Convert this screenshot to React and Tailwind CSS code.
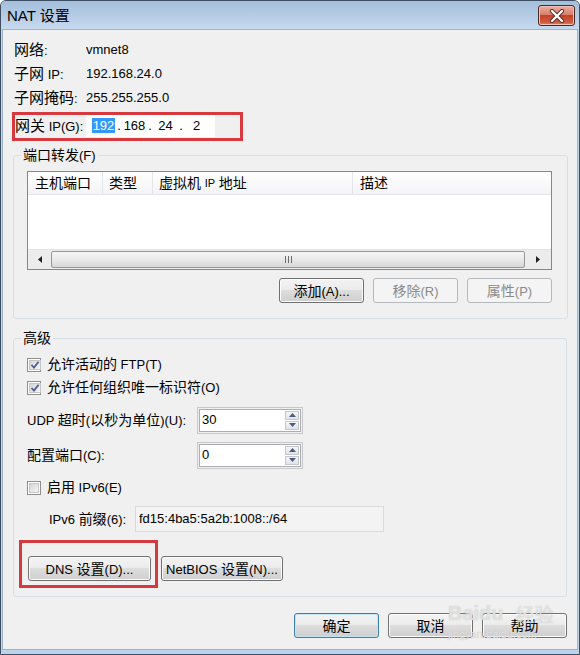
import React from "react";

const Z = ({ children }) => <span className="text-[14px]">{children}</span>;
const Z15 = ({ children }) => <span className="text-[15px]">{children}</span>;

const GRAD = "bg-[linear-gradient(#f3f3f3_0%,#ececec_45%,#dddddd_50%,#cfcfcf_100%)]";

function Btn({ children, kind = "normal", w = "w-[85px]" }) {
  const base = "h-[25px] rounded-[3px] border flex items-center justify-center text-[13px] leading-none shrink-0";
  let k = "border-[#707070] text-black shadow-[inset_0_0_0_1px_#fbfbfb] " + GRAD;
  if (kind === "disabled") k = "border-[#b5b9bc] text-[#8a8a8a] bg-[#f4f4f4]";
  if (kind === "default") k = "border-[#3c7fb1] text-black shadow-[inset_0_0_0_1px_#bfe6f7] " + GRAD;
  return (
    <div className={base + " " + k + " " + w}>
      <span className="whitespace-pre">{children}</span>
    </div>
  );
}

function Check({ checked }) {
  return (
    <span className="w-[14px] h-[14px] border border-[#8e8f8f] bg-white p-[1px] flex shrink-0">
      <span className="flex-1 bg-[linear-gradient(135deg,#d4d4d4,#f6f6f6)] border border-[#c6c6c6] flex items-center justify-center">
        {checked && (
          <svg width="10" height="10" viewBox="0 0 10 10">
            <path d="M1.5 5 L4 7.6 L8.6 1.8" fill="none" stroke="#4b5f8f" strokeWidth="1.8" />
          </svg>
        )}
      </span>
    </span>
  );
}

function Spin({ value }) {
  return (
    <div className="w-[106px] h-[27px] border border-[#c8c8c8] p-[1px] flex">
      <div className="flex-1 border border-[#abadb3] bg-white flex">
        <div className="flex-1 pl-[2px] flex items-center text-[13px]">{value}</div>
        <div className="w-[16px] flex flex-col gap-[1px] p-[1px]">
          <div className="flex-1 border border-[#c3c8cf] bg-linear-to-b from-[#f6f6f6] to-[#e0e3e8] flex items-center justify-center">
            <svg width="7" height="4" viewBox="0 0 7 4"><path d="M0 4 L3.5 0 L7 4Z" fill="#4d5c80" /></svg>
          </div>
          <div className="flex-1 border border-[#c3c8cf] bg-linear-to-b from-[#f6f6f6] to-[#e0e3e8] flex items-center justify-center">
            <svg width="7" height="4" viewBox="0 0 7 4"><path d="M0 0 L3.5 4 L7 0Z" fill="#4d5c80" /></svg>
          </div>
        </div>
      </div>
    </div>
  );
}

export default function App() {
  return (
    <div className="relative w-[580px] h-[655px] font-['Liberation_Sans','Noto_Sans_CJK_SC',sans-serif] text-[13px] text-black bg-[#bcd3ea] border border-[#3e4f63] rounded-t-[6px] flex flex-col overflow-hidden">
      {/* Title bar */}
      <div className="h-[28px] shrink-0 flex items-start justify-between bg-linear-to-b from-[#a4bedb] to-[#c6d9ee]">
        <div className="pl-[6px] pt-[5px] text-[15px] leading-[18px]">
          NAT <span className="font-['Noto_Sans_CJK_SC',sans-serif]">设置</span>
        </div>
        <div className="mt-[4px] mr-[4px] w-[37px] h-[21px] rounded-[3px] border border-[#4a2a28] bg-[linear-gradient(#eab0a3_0%,#d9806c_45%,#c3442a_50%,#cf5a3e_85%,#e0876a_100%)] shadow-[inset_0_0_0_1px_#f2c1b5] flex items-center justify-center">
          <svg width="16" height="14" viewBox="0 0 16 14">
            <path d="M3 2 L13 12 M13 2 L3 12" stroke="#5a2a22" strokeWidth="4.2" strokeLinecap="round" />
            <path d="M3 2 L13 12 M13 2 L3 12" stroke="#ffffff" strokeWidth="2.4" strokeLinecap="round" />
          </svg>
        </div>
      </div>

      {/* Body */}
      <div className="flex-1 mx-[1px] mb-[3px] border border-[#9fb3c9] bg-[#f0f0f0] flex flex-col pt-[8px]">
        <div className="flex h-[24px] items-center pl-[11px]">
          <div className="w-[72px]"><Z15>网络</Z15>:</div>
          <div>vmnet8</div>
        </div>
        <div className="flex h-[24px] items-center pl-[11px]">
          <div className="w-[72px]"><Z15>子网</Z15> IP:</div>
          <div>192.168.24.0</div>
        </div>
        <div className="flex h-[24px] items-center pl-[11px]">
          <div className="w-[72px] whitespace-nowrap"><Z15>子网掩码</Z15>:</div>
          <div>255.255.255.0</div>
        </div>

        {/* Gateway red box */}
        <div className="mt-[2px] ml-[9px] w-[231px] h-[29px] border-[3px] border-[#d7393f] flex items-start">
          <div className="w-[71px] h-[23px] flex items-center whitespace-nowrap"><Z15>网关</Z15>&nbsp;IP(G):</div>
          <div className="w-[129px] h-[22px] bg-white flex items-center pl-[5px] text-[13px]">
            <span className="w-[25px] text-center"><span className="bg-[#3399ff] text-white px-[1px]">192</span></span>
            <span className="w-[6px] text-center">.</span>
            <span className="w-[25px] text-center">168</span>
            <span className="w-[6px] text-center">.</span>
            <span className="w-[25px] text-center">24</span>
            <span className="w-[6px] text-center">.</span>
            <span className="w-[25px] text-center">2</span>
          </div>
        </div>

        {/* Port forwarding */}
        <fieldset className="mt-[5px] ml-[10px] w-[555px] border border-[#d5dfe5] rounded-[3px]">
          <legend className="ml-[7px] px-[2px] leading-[18px]"><Z>端口转发</Z>(F)</legend>
          <div className="pl-[13px] pt-[6px] pb-[15px]">
            <div className="w-[525px] h-[99px] border border-[#828790] bg-white flex flex-col">
              <div className="h-[23px] flex border-b border-[#e3e5e8] bg-linear-to-b from-white to-[#f3f4f6]">
                <div className="w-[75px] pl-[7px] border-r border-[#e3e5e8] flex items-center"><Z>主机端口</Z></div>
                <div className="w-[50px] pl-[6px] border-r border-[#e3e5e8] flex items-center"><Z>类型</Z></div>
                <div className="w-[200px] pl-[6px] border-r border-[#e3e5e8] flex items-center whitespace-nowrap"><Z>虚拟机</Z>&nbsp;<span className="text-[11px]">IP</span>&nbsp;<Z>地址</Z></div>
                <div className="flex-1 pl-[7px] flex items-center"><Z>描述</Z></div>
              </div>
              <div className="flex-1" />
              <div className="h-[20px] flex bg-[#ececec] border-t border-[#e2e2e2]">
                <div className="w-[23px] flex items-center justify-center">
                  <svg width="4" height="7" viewBox="0 0 4 7"><path d="M4 0 L0 3.5 L4 7Z" fill="#222" /></svg>
                </div>
                <div className="flex-1 my-[1px] rounded-[2px] border border-[#979797] bg-[linear-gradient(#f6f6f6_0%,#e9e9e9_50%,#d7d7d7_100%)] flex items-center justify-center gap-[2px]">
                  <span className="w-[1px] h-[7px] bg-[#6b6b6b]" />
                  <span className="w-[1px] h-[7px] bg-[#6b6b6b]" />
                  <span className="w-[1px] h-[7px] bg-[#6b6b6b]" />
                </div>
                <div className="w-[26px] flex items-center justify-center">
                  <svg width="4" height="7" viewBox="0 0 4 7"><path d="M0 0 L4 3.5 L0 7Z" fill="#222" /></svg>
                </div>
              </div>
            </div>
            <div className="mt-[8px] w-[525px] flex justify-end gap-[9px]">
              <Btn><Z>添加</Z>(A)...</Btn>
              <Btn kind="disabled"><Z>移除</Z>(R)</Btn>
              <Btn kind="disabled"><Z>属性</Z>(P)</Btn>
            </div>
          </div>
        </fieldset>

        {/* Advanced */}
        <fieldset className="mt-[10px] ml-[10px] w-[554px] border border-[#d5dfe5] rounded-[3px]">
          <legend className="ml-[7px] px-[2px] leading-[18px]"><Z>高级</Z></legend>
          <div className="pl-[13px] pt-[5px] pb-[8px] flex flex-col">
            <div className="h-[23px] flex items-center gap-[6px]">
              <Check checked />
              <span><Z>允许活动的</Z> FTP(T)</span>
            </div>
            <div className="h-[23px] flex items-center gap-[6px]">
              <Check checked />
              <span><Z>允许任何组织唯一标识符</Z>(O)</span>
            </div>
            <div className="mt-[8px] h-[26px] flex items-center">
              <div className="w-[170px] whitespace-nowrap">UDP <Z>超时</Z>(<Z>以秒为单位</Z>)(U):</div>
              <Spin value="30" />
            </div>
            <div className="mt-[9px] h-[26px] flex items-center">
              <div className="w-[170px]"><Z>配置端口</Z>(C):</div>
              <Spin value="0" />
            </div>
            <div className="mt-[8px] h-[23px] flex items-center gap-[6px]">
              <Check />
              <span><Z>启用</Z> IPv6(E)</span>
            </div>
            <div className="mt-[7px] h-[26px] flex items-center pl-[22px]">
              <div className="w-[86px] whitespace-nowrap">IPv6 <Z>前缀</Z>(6):</div>
              <div className="w-[249px] h-[26px] border border-[#dadada] bg-[#f3f3f3] flex items-center pl-[3px] text-[13px]">
                fd15:4ba5:5a2b:1008::/64
              </div>
            </div>
            <div className="mt-[8px] ml-[-8px] flex items-start">
              <div className="w-[139px] h-[48px] border-[3px] border-[#d7393f] pl-[6px] pt-[13px]">
                <Btn w="w-[123px]">DNS <Z>设置</Z>(D)...</Btn>
              </div>
              <div className="ml-[3px] mt-[16px]">
                <Btn w="w-[122px]">NetBIOS <Z>设置</Z>(N)...</Btn>
              </div>
            </div>
          </div>
        </fieldset>

        <div className="mt-[16px] pr-[10px] flex justify-end gap-[9px]">
          <Btn kind="default"><Z>确定</Z></Btn>
          <Btn><Z>取消</Z></Btn>
          <Btn><Z>帮助</Z></Btn>
        </div>
      </div>
      <div className="h-[1px]" />

      {/* Watermark */}
      <div className="absolute left-[447px] top-[602px] flex flex-col items-start pointer-events-none text-white/60 [text-shadow:0_0_1px_#b0b0b0]">
        <div className="flex items-end leading-none">
          <span className="text-[20px] font-bold">Baidu</span>
          <span className="ml-[12px] text-[19px] font-['Noto_Sans_CJK_SC',sans-serif]">经验</span>
        </div>
        <div className="mt-[6px] text-[11px] leading-none">jingyan.baidu.com</div>
      </div>
    </div>
  );
}
